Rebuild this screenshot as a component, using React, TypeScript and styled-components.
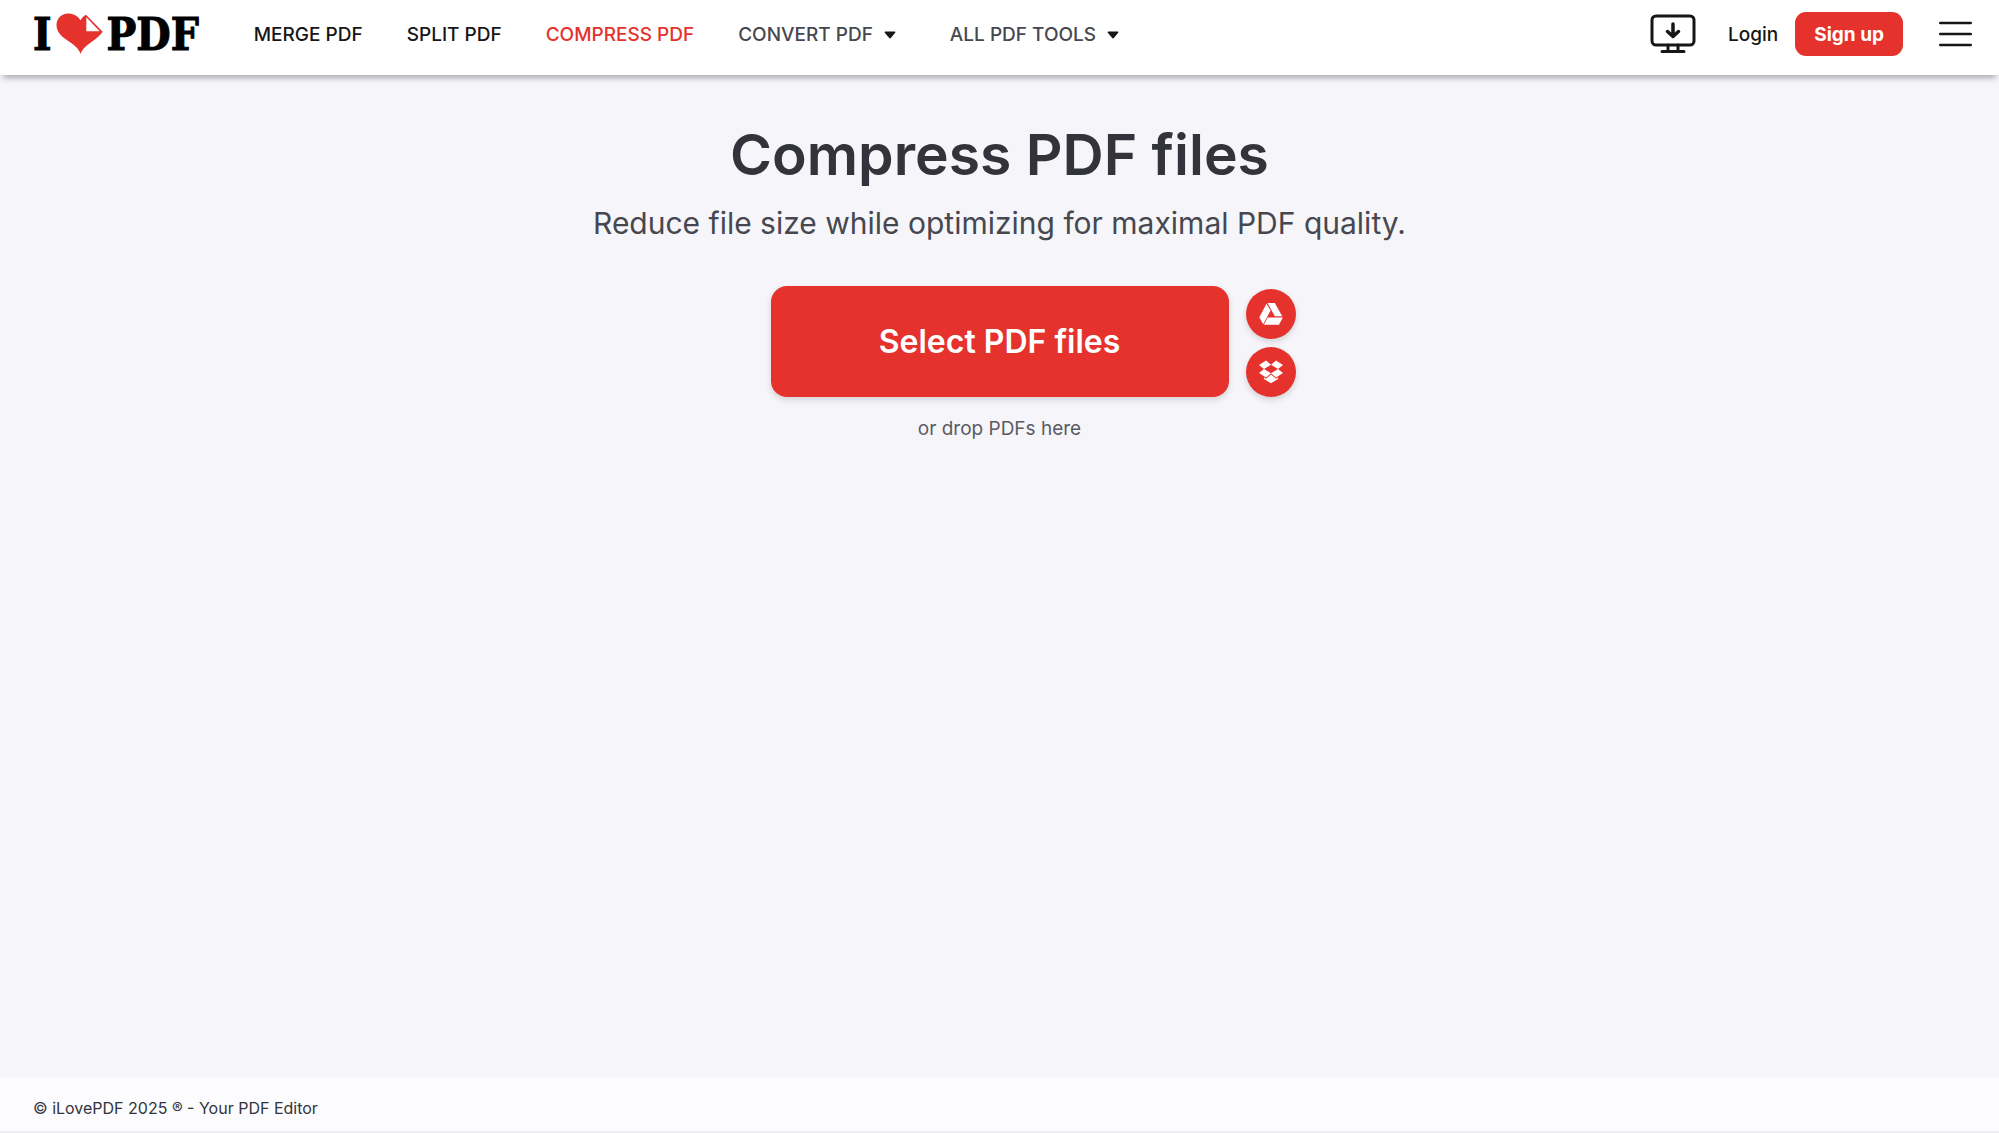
import React from "react";
import styled, { createGlobalStyle } from "styled-components";

const GlobalStyle = createGlobalStyle`
  *, *::before, *::after { box-sizing: border-box; }
  body {
    margin: 0;
    background: #f5f5fa;
    color: #161616;
    font-family: Inter, "Liberation Sans", sans-serif;
  }
  button { font-family: inherit; border: 0; padding: 0; cursor: pointer; }
  a { color: inherit; text-decoration: none; }
`;

const Page = styled.div`
  min-height: 100vh;
  display: flex;
  flex-direction: column;
`;

const Header = styled.header`
  display: flex;
  align-items: center;
  height: 75px;
  padding: 0 27px 8px 33px;
  background: #fff;
  box-shadow: 0 6px 6px -3px rgba(0, 0, 0, 0.3);
`;

const Logo = styled.a`
  display: flex;
  align-items: center;
  gap: 4px;
  color: #000;
  font: bold 44px/48px "DejaVu Serif Condensed", "DejaVu Serif", serif;
  -webkit-text-stroke: 1px #000;
`;

const LogoText = styled.span`
  padding-top: 2px;
`;

const Nav = styled.nav`
  display: flex;
  align-items: center;
  gap: 44px;
  margin-left: 55px;
  padding-top: 2px;
  font-size: 19px;
  font-weight: 500;
  line-height: 24px;
`;

const NavLink = styled.a<{ $active?: boolean }>`
  color: ${(p) => (p.$active ? "#e5322d" : "#161616")};
`;

const NavMenu = styled.button`
  display: flex;
  align-items: center;
  gap: 11px;
  padding-right: 10px;
  background: none;
  color: #47474f;
  font-size: 19px;
  font-weight: 500;
  line-height: 24px;
`;

const Actions = styled.div`
  display: flex;
  align-items: center;
  margin-left: auto;
  font-size: 19px;
  font-weight: 500;
`;

const IconButton = styled.button`
  display: flex;
  background: none;
`;

const Login = styled.a`
  margin: 0 17px 0 32px;
  padding-top: 2px;
`;

const SignUp = styled.a`
  display: flex;
  align-items: center;
  height: 44px;
  margin-right: 36px;
  padding: 2px 19px 0;
  border-radius: 11px;
  background: #e5322d;
  color: #fff;
  font-weight: 700;
`;

const Main = styled.main`
  flex: 1;
  display: flex;
  flex-direction: column;
  align-items: center;
  padding-top: 44px;
  text-align: center;
`;

const Title = styled.h1`
  margin: 0;
  color: #33333b;
  font-size: 57px;
  font-weight: 600;
  line-height: 72px;
`;

const Subtitle = styled.p`
  margin: 12px 0 0;
  color: #47474f;
  font-size: 30px;
  font-weight: 400;
  line-height: 40px;
`;

const Uploader = styled.div`
  display: grid;
  grid-template-columns: 1fr minmax(0, 458px) 1fr;
  align-items: end;
  column-gap: 17px;
  width: 100%;
  margin-top: 43px;
`;

const SelectButton = styled.button`
  grid-column: 2;
  height: 111px;
  border-radius: 16px;
  background: #e5322d;
  box-shadow: 0 3px 6px rgba(0, 0, 0, 0.14);
  color: #fff;
  font-size: 32px;
  font-weight: 600;
`;

const Sources = styled.div`
  display: flex;
  flex-direction: column;
  gap: 8px;
`;

const SourceButton = styled.button`
  display: flex;
  align-items: center;
  justify-content: center;
  width: 50px;
  height: 50px;
  border-radius: 50%;
  background: #e5322d;
  box-shadow: 0 3px 6px rgba(0, 0, 0, 0.14);
`;

const DropHint = styled.p`
  margin: 20px 0 0;
  color: #5b5b62;
  font-size: 19px;
  line-height: 24px;
`;

const Footer = styled.footer`
  display: flex;
  align-items: center;
  height: 56px;
  padding: 8px 33px 0;
  border-bottom: 2px solid #eeeef0;
  background: #fcfcfe;
  color: #33333b;
  font-size: 16px;
`;

const Heart = () => (
  <svg width="47" height="42" viewBox="0 0 47 42" aria-hidden="true">
    <path
      fill="#e5322d"
      d="M24.500 41C23 35.500 17.500 31.500 11.500 27.500C5 23.200 0.500 18.500 0.500 12C0.500 5.500 5.500 0.500 12 0.500C17 0.500 22 2.800 24.500 7.200C25.800 4.800 27.800 2.800 30 1.700L46.700 18.700C44.500 22 41.500 24.500 37.500 27.500C32 31.500 26.200 35.500 24.500 41Z"
    />
    <path fill="#fff" d="M30.300 4.300L43.700 18.200H30.300Z" />
  </svg>
);

const Caret = () => (
  <svg width="12" height="8" viewBox="0 0 12 8" aria-hidden="true">
    <path
      d="M1.200 0.500H10.800Q11.900 0.700 11.200 1.700L6.800 7Q6 7.800 5.200 7L0.800 1.700Q0.100 0.700 1.200 0.500Z"
      fill="#161616"
    />
  </svg>
);

const DesktopIcon = () => (
  <svg
    width="46"
    height="40"
    viewBox="0 0 46 40"
    fill="none"
    stroke="#161616"
    strokeWidth="3"
    strokeLinecap="round"
    strokeLinejoin="round"
    aria-hidden="true"
  >
    <rect x="2" y="2" width="42" height="29" rx="4" />
    <path d="M18 31V37M28 31V37M12 37.500H34" />
    <path d="M23 10V22M17.500 17.500L23 22.500L28.500 17.500" strokeWidth="3.500" />
  </svg>
);

const MenuIcon = () => (
  <svg
    width="33"
    height="26"
    viewBox="0 0 33 26"
    stroke="#161616"
    strokeWidth="2.6"
    strokeLinecap="round"
    aria-hidden="true"
  >
    <path d="M1.300 2H31.700M1.300 13H31.700M1.300 24H31.700" />
  </svg>
);

const DriveIcon = () => (
  <svg width="24" height="22" viewBox="0 0 24 22" fill="#fff" aria-hidden="true">
    <path d="M7.500 0.700L0.300 14.300L4.200 21.200L11.600 7.600Z" />
    <path d="M8.500 0H15.800L23.300 13.300H15.900Z" />
    <path d="M8.700 14.500H23.800L20 21.700H4.900Z" />
  </svg>
);

const DropboxIcon = () => (
  <svg width="24" height="24" viewBox="0 0 24 24" fill="#fff" aria-hidden="true">
    <path d="M7 0.500L12 4.700L5 9L0 5Z" />
    <path d="M17 0.500L24 5L19 9L12 4.700Z" />
    <path d="M5 9L12 13.300L7 17.500L0 13Z" />
    <path d="M19 9L24 13L17 17.500L12 13.300Z" />
    <path d="M12 14.600L17 18.700L19.100 17.300V18.900L12 23.300L4.900 18.900V17.300L7 18.700Z" />
  </svg>
);

export default function App() {
  return (
    <Page>
      <GlobalStyle />
      <Header>
        <Logo href="#" aria-label="I love PDF">
          <LogoText>I</LogoText>
          <Heart />
          <LogoText>PDF</LogoText>
        </Logo>
        <Nav>
          <NavLink href="#merge">MERGE PDF</NavLink>
          <NavLink href="#split">SPLIT PDF</NavLink>
          <NavLink href="#compress" $active>
            COMPRESS PDF
          </NavLink>
          <NavMenu type="button">
            CONVERT PDF <Caret />
          </NavMenu>
          <NavMenu type="button">
            ALL PDF TOOLS <Caret />
          </NavMenu>
        </Nav>
        <Actions>
          <IconButton type="button" aria-label="Desktop app">
            <DesktopIcon />
          </IconButton>
          <Login href="#login">Login</Login>
          <SignUp href="#signup">Sign up</SignUp>
          <IconButton type="button" aria-label="Menu">
            <MenuIcon />
          </IconButton>
        </Actions>
      </Header>
      <Main>
        <Title>Compress PDF files</Title>
        <Subtitle>Reduce file size while optimizing for maximal PDF quality.</Subtitle>
        <Uploader>
          <SelectButton type="button">Select PDF files</SelectButton>
          <Sources>
            <SourceButton type="button" aria-label="Google Drive">
              <DriveIcon />
            </SourceButton>
            <SourceButton type="button" aria-label="Dropbox">
              <DropboxIcon />
            </SourceButton>
          </Sources>
        </Uploader>
        <DropHint>or drop PDFs here</DropHint>
      </Main>
      <Footer>© iLovePDF 2025 ® - Your PDF Editor</Footer>
    </Page>
  );
}
